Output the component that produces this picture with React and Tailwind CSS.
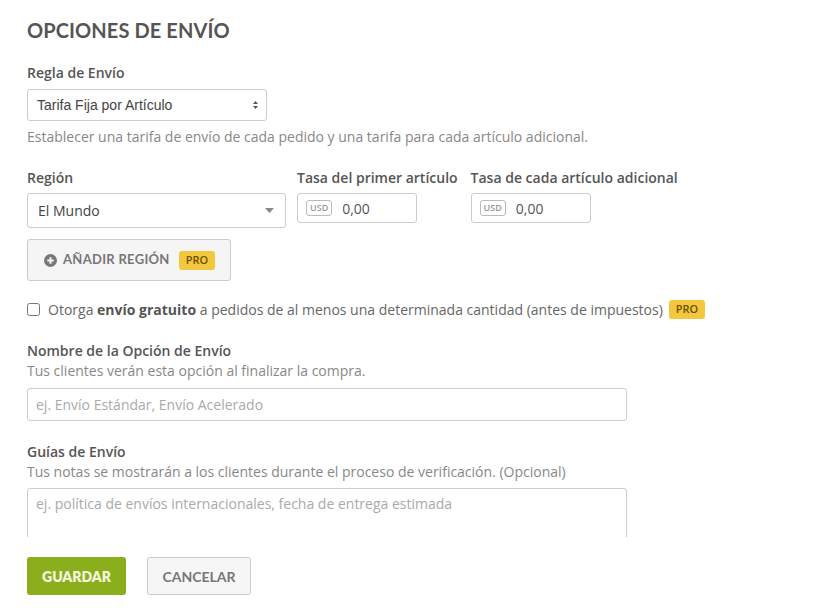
import React, { useState } from 'react';

const Pro = ({ className = '' }) => (
    <span className={`inline-flex items-center justify-center h-[19px] px-[7px] rounded-[3px] bg-[#f3c73e] text-[#6b5200] text-[11px] font-semibold font-['Open_Sans',sans-serif] ${className}`}>PRO</span>
);

const UsdInput = () => (
    <div className="flex items-center w-[120px] h-[30px] border border-[#ccc] rounded-[3px] bg-white pl-[8px]">
        <span className="border border-[#bbb] rounded-[3px] text-[9px] leading-[14px] px-[3px] text-[#999] font-semibold">USD</span>
        <span className="ml-[10px] text-[14px] text-[#555]">0,00</span>
    </div>
);

export default function App() {
    const [free, setFree] = useState(false);

    return (
        <div className="w-[818px] h-[608px] bg-white font-['Open_Sans',sans-serif] text-[#555] pl-[27px] pt-[18px] overflow-hidden">
            <h1 className="font-['Lato',sans-serif] font-bold text-[20px] leading-[24px] text-[#555] tracking-[0.1px]">OPCIONES DE ENVÍO</h1>

            <div className="mt-[22px]">
                <label className="block text-[14px] font-semibold leading-[18px]">Regla de Envío</label>
                <div className="mt-[7px] flex items-center justify-between w-[240px] h-[32px] border border-[#ccc] rounded-[3px] bg-white pl-[9px] pr-[7px] font-['Liberation_Sans',Arial,sans-serif] text-[14px] text-[#444]">
                    <span>Tarifa Fija por Artículo</span>
                    <svg width="7" height="10" viewBox="0 0 7 10"><path d="M3.5 1 L6 4 H1 Z M3.5 9 L6 6 H1 Z" fill="#555" /></svg>
                </div>
                <p className="mt-[7px] text-[14px] leading-[18px] text-[#888]">Establecer una tarifa de envío de cada pedido y una tarifa para cada artículo adicional.</p>
            </div>

            <div className="mt-[23px] flex gap-[11px]">
                <div>
                    <label className="block text-[14px] font-semibold leading-[18px]">Región</label>
                    <div className="mt-[6px] flex items-center justify-between w-[259px] h-[35px] border border-[#ccc] rounded-[3px] bg-white pl-[10px] pr-[11px] text-[14px] text-[#444]">
                        <span>El Mundo</span>
                        <svg width="9" height="5" viewBox="0 0 9 5"><path d="M0 0 H9 L4.5 5 Z" fill="#888" /></svg>
                    </div>
                </div>
                <div>
                    <label className="block text-[14px] font-semibold leading-[18px]">Tasa del primer artículo</label>
                    <div className="mt-[6px]"><UsdInput /></div>
                </div>
                <div className="ml-[2px]">
                    <label className="block text-[14px] font-semibold leading-[18px]">Tasa de cada artículo adicional</label>
                    <div className="mt-[6px]"><UsdInput /></div>
                </div>
            </div>

            <button className="mt-[11px] flex items-center h-[42px] w-[204px] pl-[16px] border border-[#ccc] rounded-[3px] bg-[#f5f5f5] text-[#777] font-['Lato',sans-serif] font-bold text-[13px]">
                <svg width="13" height="13" viewBox="0 0 14 14" className="mr-[6px]">
                    <circle cx="7" cy="7" r="7" fill="#777" />
                    <path d="M7 3.5 V10.5 M3.5 7 H10.5" stroke="#f5f5f5" strokeWidth="2.2" />
                </svg>
                <span className="tracking-[0.3px]">AÑADIR REGIÓN</span>
                <Pro className="ml-[9px]" />
            </button>

            <div className="mt-[18px] flex items-center">
                <input type="checkbox" checked={free} onChange={e => setFree(e.target.checked)} className="w-[13px] h-[13px] m-0 accent-[#777]" />
                <span className="ml-[8px] text-[14px] text-[#666]">Otorga <b className="font-bold text-[#555]">envío gratuito</b> a pedidos de al menos una determinada cantidad (antes de impuestos)</span>
                <Pro className="ml-[6px]" />
            </div>

            <div className="mt-[22px]">
                <label className="block text-[14px] font-semibold leading-[18px]">Nombre de la Opción de Envío</label>
                <p className="mt-[2px] text-[14px] leading-[18px] text-[#888]">Tus clientes verán esta opción al finalizar la compra.</p>
                <input placeholder="ej. Envío Estándar, Envío Acelerado" className="mt-[8px] block w-[600px] h-[33px] border border-[#ccc] rounded-[3px] px-[8px] text-[14px] placeholder:text-[#aaa] outline-none" />
            </div>

            <div className="mt-[22px]">
                <label className="block text-[14px] font-semibold leading-[18px]">Guías de Envío</label>
                <p className="mt-[2px] text-[14px] leading-[18px] text-[#888]">Tus notas se mostrarán a los clientes durante el proceso de verificación. (Opcional)</p>
                <div className="mt-[7px] h-[49px] w-[600px] overflow-hidden">
                    <textarea placeholder="ej. política de envíos internacionales, fecha de entrega estimada" className="block w-[600px] h-[80px] resize-none border border-[#ccc] rounded-[3px] px-[8px] py-[5px] text-[14px] leading-[20px] placeholder:text-[#aaa] outline-none" />
                </div>
            </div>

            <div className="mt-[20px] flex gap-[21px]">
                <button className="h-[38px] w-[99px] rounded-[3px] bg-[#8aae1c] text-[#f4f8dc] font-['Lato',sans-serif] font-extrabold text-[14px]">GUARDAR</button>
                <button className="h-[38px] w-[104px] rounded-[3px] border border-[#ccc] bg-[#f6f6f6] text-[#777] font-['Lato',sans-serif] font-bold text-[14px]">CANCELAR</button>
            </div>
        </div>
    );
}
